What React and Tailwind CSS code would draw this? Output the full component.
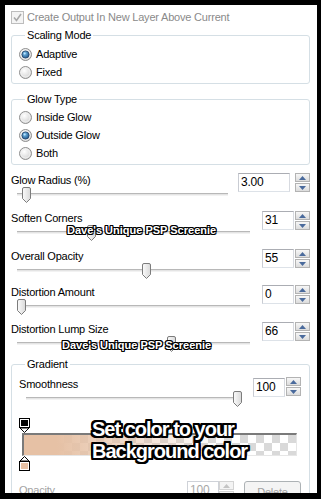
import React from "react";

const outline1 =
  "[text-shadow:1px_0_#000,-1px_0_#000,0_1px_#000,0_-1px_#000,1px_1px_#000,-1px_-1px_#000,1px_-1px_#000,-1px_1px_#000]";

function Radio({ checked, label }) {
  return (
    <div className="flex h-[18px] items-center">
      <svg width="13" height="13" viewBox="0 0 13 13">
        <circle cx="6.5" cy="6.5" r="6" fill="url(#radioFill)" stroke="#8f8f8f" />
        <circle cx="6.5" cy="6.5" r="4.5" fill="none" stroke="#f4f4f4" strokeWidth="0.8" />
        {checked && (
          <>
            <circle cx="6.5" cy="6.5" r="3.6" fill="url(#radioDot)" stroke="#1f3f66" strokeWidth="0.8" />
            <circle cx="5.6" cy="5.4" r="1" fill="#bfe6ff" />
          </>
        )}
      </svg>
      <span className="ml-[4px] leading-[14px]">{label}</span>
    </div>
  );
}

function Thumb({ left }) {
  return (
    <svg className="absolute top-0" style={{ left }} width="11" height="17" viewBox="0 0 11 17">
      <path
        d="M1.5 2 Q1.5 0.5 3 0.5 H8 Q9.5 0.5 9.5 2 V11.5 L5.5 15.5 L1.5 11.5 Z"
        fill="url(#thumbFill)"
        stroke="#7c7c7c"
      />
    </svg>
  );
}

function Spin({ disabled }) {
  const arrow = disabled ? "#c4c4c4" : "#4a6a9c";
  const btn = disabled
    ? "flex h-[9px] items-center justify-center border border-[#d4d4d4] bg-[#f4f4f4]"
    : "flex h-[9px] items-center justify-center border border-[#b3b3b3] bg-gradient-to-b from-[#f7f7f7] to-[#dcdcdc]";
  return (
    <div className="flex w-[15px] flex-col gap-[1px]">
      <div className={btn}>
        <svg width="7" height="4" viewBox="0 0 7 4">
          <path d="M3.5 0 L7 4 H0 Z" fill={arrow} />
        </svg>
      </div>
      <div className={btn}>
        <svg width="7" height="4" viewBox="0 0 7 4">
          <path d="M0 0 H7 L3.5 4 Z" fill={arrow} />
        </svg>
      </div>
    </div>
  );
}

function ValueBox({ value, boxClass }) {
  return (
    <div
      className={`h-[19px] border border-[#abadb3] border-l-[#c9ccd3] border-r-[#d7dae0] border-b-[#dde2e8] bg-white pl-[2px] text-[12px] leading-[17px] text-black ${boxClass}`}
    >
      {value}
    </div>
  );
}

function SliderRow({ label, value, rowClass, trackClass, thumb, boxClass }) {
  return (
    <div className={`flex ${rowClass}`}>
      <div className="flex flex-1 flex-col">
        <div className="h-[14px] leading-[14px]">{label}</div>
        <div className={`relative h-[17px] ${trackClass}`}>
          <div className="absolute left-0 right-0 top-[6px] h-[3px] border-t border-b border-t-[#b8b8b8] border-b-[#f2f2f2] bg-[#e4e4e4]" />
          <Thumb left={thumb} />
        </div>
      </div>
      <div className="flex items-start">
        <ValueBox value={value} boxClass={boxClass} />
        <Spin />
      </div>
    </div>
  );
}

function StopTop() {
  return (
    <svg width="11" height="15" viewBox="0 0 11 15">
      <rect x="0.5" y="0.5" width="10" height="9" fill="#fff" stroke="#000" />
      <rect x="2" y="2" width="7" height="6" fill="#000" />
      <path d="M1 10 L5.5 14.5 L10 10 Z" fill="#fff" stroke="#000" />
    </svg>
  );
}

function StopBottom() {
  return (
    <svg width="11" height="15" viewBox="0 0 11 15">
      <path d="M1 5 L5.5 0.5 L10 5 Z" fill="#fff" stroke="#000" />
      <rect x="0.5" y="5.5" width="10" height="9" fill="#fff" stroke="#000" />
      <rect x="2" y="7" width="7" height="6" fill="#e6c1a5" />
    </svg>
  );
}

export default function App() {
  return (
    <div className="h-[499px] w-[321px] bg-black pl-[5px] pt-[5px] font-['Liberation_Sans',Arial,sans-serif] text-[11px] tracking-[-0.2px] text-black">
      <svg className="absolute h-0 w-0">
        <defs>
          <radialGradient id="radioFill" cx="0.4" cy="0.35" r="0.7">
            <stop offset="0" stopColor="#ffffff" />
            <stop offset="1" stopColor="#cfcfcf" />
          </radialGradient>
          <radialGradient id="radioDot" cx="0.4" cy="0.35" r="0.7">
            <stop offset="0" stopColor="#7cc4f0" />
            <stop offset="1" stopColor="#1c5288" />
          </radialGradient>
          <linearGradient id="thumbFill" x1="0" y1="0" x2="1" y2="0">
            <stop offset="0" stopColor="#fbfbfb" />
            <stop offset="1" stopColor="#d9d9d9" />
          </linearGradient>
        </defs>
      </svg>

      <div className="relative h-[488px] w-[312px] overflow-hidden bg-white pl-[6px] pr-[7px] pt-[6px]">
        {/* checkbox */}
        <div className="flex h-[13px] items-center">
          <svg width="13" height="13" viewBox="0 0 13 13">
            <rect x="0.5" y="0.5" width="12" height="12" fill="#f4f4f4" stroke="#bdbdbd" />
            <path d="M3 6.5 L5.5 9.5 L10 3" fill="none" stroke="#a8a8a8" strokeWidth="1.6" />
          </svg>
          <span className="ml-[3px] leading-[13px] text-[#8a8a8a]">Create Output In New Layer Above Current</span>
        </div>

        {/* Scaling Mode */}
        <fieldset className="mt-[5px] rounded-[3px] border border-[#d5dfe5] pb-[2px] pl-[7px]">
          <legend className="ml-[6px] px-[2px] leading-[13px]">Scaling Mode</legend>
          <div className="pt-[3px]">
            <Radio checked label="Adaptive" />
            <Radio label="Fixed" />
          </div>
        </fieldset>

        {/* Glow Type */}
        <fieldset className="mt-[9px] rounded-[3px] border border-[#d5dfe5] pb-[2px] pl-[7px]">
          <legend className="ml-[6px] px-[2px] leading-[13px]">Glow Type</legend>
          <div className="pt-[2px]">
            <Radio label="Inside Glow" />
            <Radio checked label="Outside Glow" />
            <Radio label="Both" />
          </div>
        </fieldset>

        <div className="mt-[8px]">
          <SliderRow label="Glow Radius (%)" value="3.00" rowClass="h-[38px]" trackClass="ml-[6px] w-[211px]" thumb={4} boxClass="w-[52px] mr-[5px]" />
          <SliderRow label="Soften Corners" value="31" rowClass="h-[38px]" trackClass="ml-[6px] w-[233px]" thumb={69} boxClass="w-[32px] mr-[1px]" />
          <SliderRow label="Overall Opacity" value="55" rowClass="h-[36px]" trackClass="ml-[6px] w-[233px]" thumb={124} boxClass="w-[32px] mr-[1px]" />
          <SliderRow label="Distortion Amount" value="0" rowClass="h-[37px]" trackClass="ml-[6px] w-[233px]" thumb={-1} boxClass="w-[32px] mr-[1px]" />
          <SliderRow label="Distortion Lump Size" value="66" rowClass="h-[36px]" trackClass="ml-[6px] w-[233px]" thumb={149} boxClass="w-[32px] mr-[1px]" />
        </div>

        {/* Gradient */}
        <fieldset className="h-[200px] rounded-[3px] border border-[#d5dfe5] pl-[7px] pr-[8px]">
          <legend className="ml-[6px] px-[2px] leading-[13px]">Gradient</legend>
          <div className="mt-[6px]">
            <SliderRow label="Smoothness" value="100" rowClass="h-[41px]" trackClass="ml-[7px] w-[216px]" thumb={206} boxClass="mt-[1px] w-[32px] mr-[1px]" />
          </div>
          <div className="flex flex-col">
            <StopTop />
            <div className="ml-[3px] h-[23px] w-[275px] border-l-2 border-t-2 border-b border-r border-l-[#7a7a7a] border-t-[#7a7a7a] border-b-[#e6e6e6] border-r-[#e6e6e6] [background-image:linear-gradient(to_right,#e6c1a5_12%,rgba(230,193,165,0)_72%),repeating-conic-gradient(#d9d9d9_0%_25%,#ffffff_0%_50%)] [background-size:100%_100%,16px_16px]" />
            <StopBottom />
          </div>
          <div className="mt-[10px] flex items-start">
            <span className="mt-[2px] leading-[14px] text-[#a3a3a3]">Opacity</span>
            <div className="ml-auto flex items-start">
              <div className="h-[19px] w-[32px] border border-[#cfd2d8] pl-[2px] text-[12px] leading-[17px] text-[#a8a8a8]">100</div>
              <Spin disabled />
              <div className="ml-[10px] flex h-[22px] w-[57px] items-center justify-center rounded-[3px] border border-[#adb2b5] bg-[#f4f4f4] text-[#a0a0a0]">
                Delete
              </div>
            </div>
          </div>
        </fieldset>

        {/* screenshot watermarks */}
        <div className={`absolute left-[62px] top-[219px] text-[11px] font-bold leading-[12px] tracking-[0px] text-white ${outline1}`}>
          Dave's Unique PSP Screenie
        </div>
        <div className={`absolute left-[57px] top-[334px] text-[11px] font-bold leading-[12px] tracking-[0px] text-white ${outline1}`}>
          Dave's Unique PSP Screenie
        </div>
        <div className="absolute left-[87px] top-[413px] text-[20px] font-bold leading-[22px] tracking-[-1px] text-white [text-shadow:2px_0_#000,-2px_0_#000,0_2px_#000,0_-2px_#000,2px_2px_#000,-2px_-2px_#000,2px_-2px_#000,-2px_2px_#000,1px_2px_#000,2px_1px_#000,-1px_-2px_#000,-2px_-1px_#000,1px_-2px_#000,-1px_2px_#000,2px_-1px_#000,-2px_1px_#000]">
          Set color to your
          <br />
          Background color
        </div>
      </div>
    </div>
  );
}
